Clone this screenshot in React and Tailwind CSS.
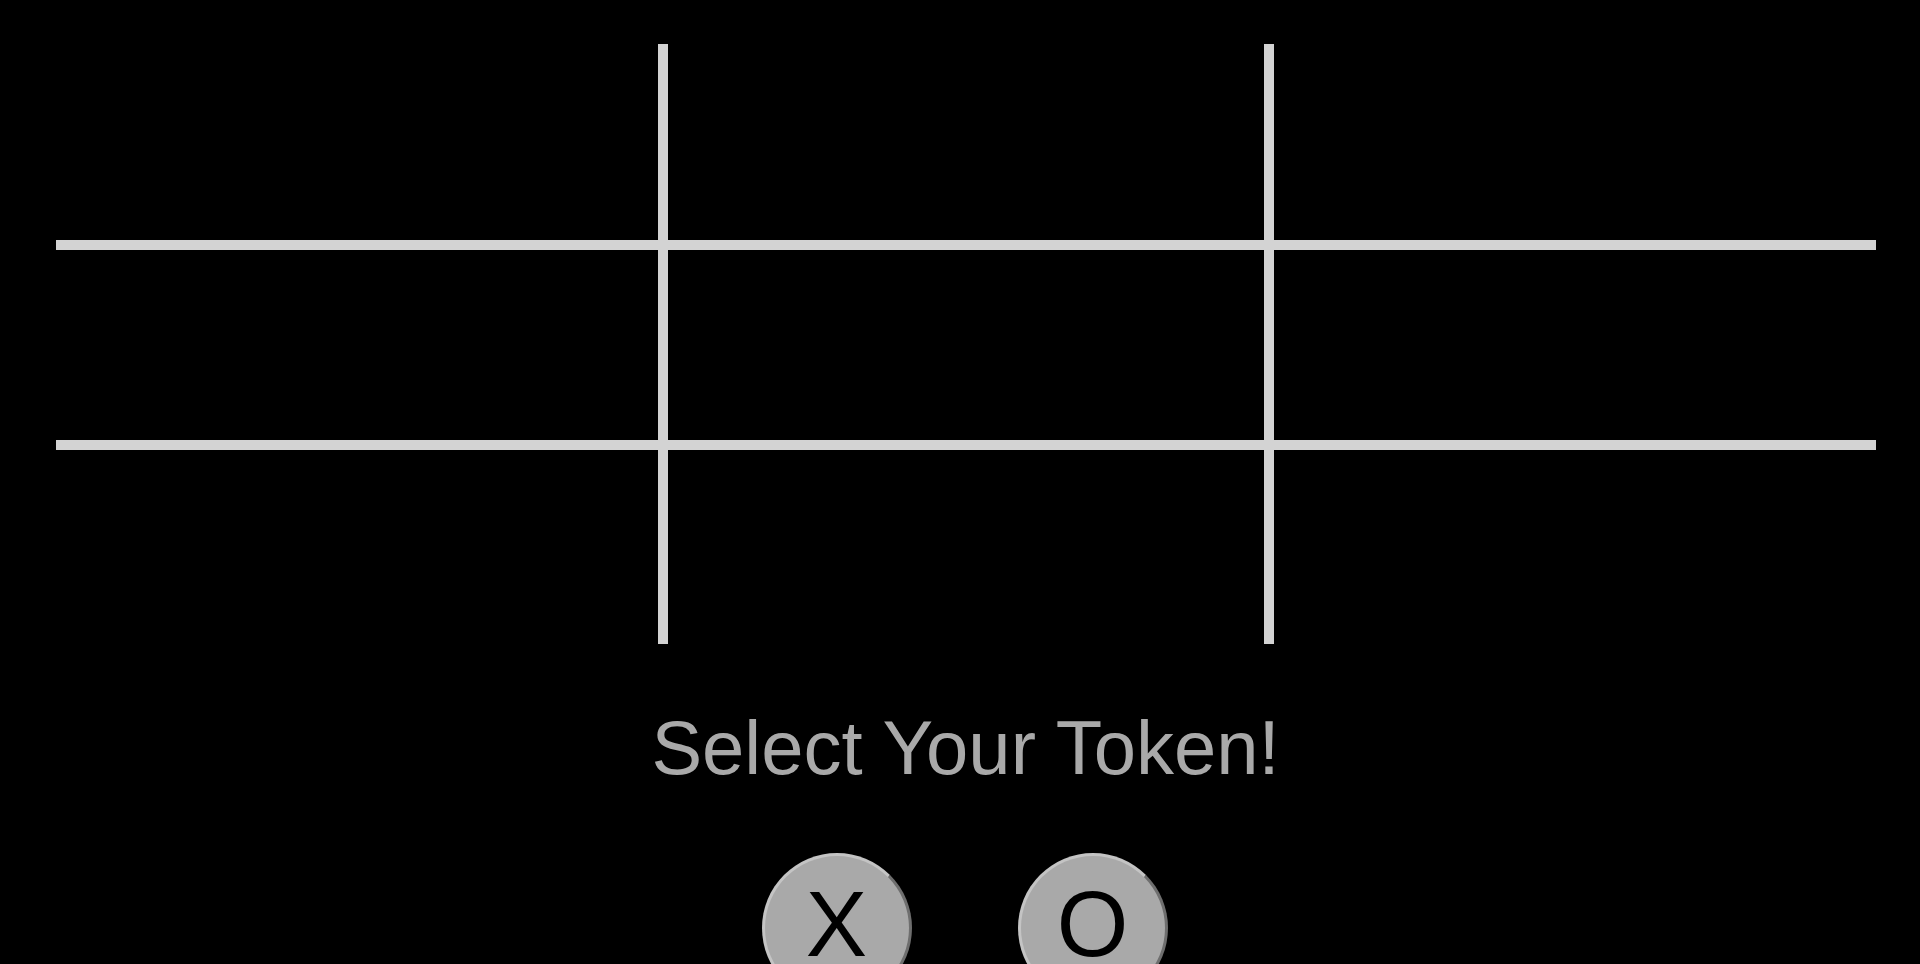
import React, { useState } from 'react';

const cellBorders = [
  'border-r-[5px] border-b-[5px]',
  'border-x-[5px] border-b-[5px]',
  'border-l-[5px] border-b-[5px]',
  'border-r-[5px] border-y-[5px]',
  'border-x-[5px] border-y-[5px]',
  'border-l-[5px] border-y-[5px]',
  'border-r-[5px] border-t-[5px]',
  'border-x-[5px] border-t-[5px]',
  'border-l-[5px] border-t-[5px]',
];

const App = () => {
  const [cells, setCells] = useState(Array(9).fill(''));
  const [token, setToken] = useState(null);

  const play = (i) => {
    if (!token || cells[i]) return;
    const next = [...cells];
    next[i] = token;
    setCells(next);
  };

  return (
    <div className="min-h-[964px] bg-black overflow-hidden" style={{ fontFamily: '"Liberation Sans", Arial, sans-serif' }}>
      {/* Board */}
      <div className="pt-[44px] pl-[56px]">
        <div className="grid grid-cols-3 grid-rows-[201px_200px_199px] w-[1820px] h-[600px]">
          {cells.map((c, i) => (
            <div
              key={i}
              onClick={() => play(i)}
              className={`${cellBorders[i]} border-[#d3d3d3] flex items-center justify-center text-[120px] text-[#d3d3d3]`}
            >
              {c}
            </div>
          ))}
        </div>
      </div>

      {/* Token picker */}
      <h1 className="mt-[66px] ml-[11px] text-center text-[76px] leading-none text-[#a9a9a9] font-normal">
        Select Your Token!
      </h1>
      <div className="mt-[67px] ml-[9px] flex justify-center gap-[106px]">
        {['X', 'O'].map(t => (
          <button
            key={t}
            onClick={() => setToken(t)}
            className="w-[150px] h-[150px] shrink-0 rounded-full bg-[#a9a9a9] border-[3px] border-t-[#c4c4c4] border-l-[#c4c4c4] border-r-[#6e6e6e] border-b-[#6e6e6e] text-black text-[92px] leading-none flex justify-center pt-[22px]"
          >
            {t}
          </button>
        ))}
      </div>
    </div>
  );
};

export default App;
